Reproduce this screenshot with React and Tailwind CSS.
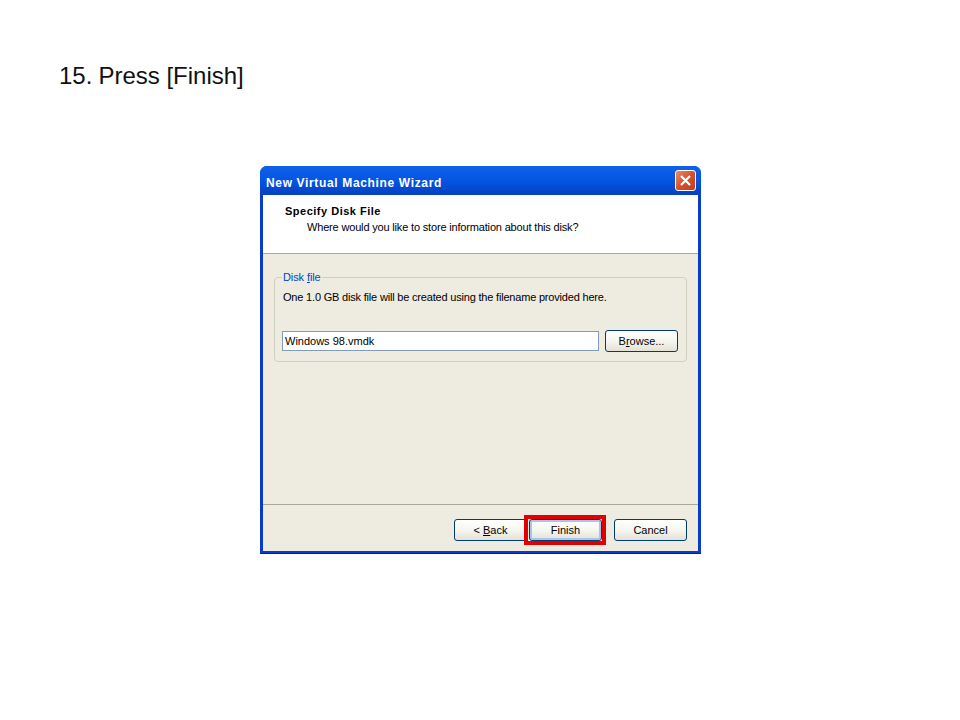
import React from 'react';

const font = "font-['Liberation_Sans',Arial,sans-serif]";

function XpButton({ children, className = '' }) {
    return (
        <button className={`h-[22px] rounded-[3px] border border-[#003c74] bg-gradient-to-b from-white via-[#f6f6f0] to-[#e4e1d6] text-[11px] leading-[20px] text-black text-center ${className}`}>
            {children}
        </button>
    );
}

export default function App() {
    return (
        <div className={`w-[960px] h-[720px] bg-white overflow-hidden ${font}`}>
            <h1 className="pt-[62px] pl-[59px] text-[24px] leading-[27px] font-normal text-[#111]">
                15.<span className="ml-[6px]">Press [Finish]</span>
            </h1>

            {/* Wizard window */}
            <div className="ml-[260px] mt-[77px] w-[441px] h-[388px] flex flex-col rounded-t-[7px] bg-[#0a3ccc] border-b border-[#00209a] px-[3px] pb-[2px] overflow-hidden">
                <div className="-mx-[3px] h-[29px] shrink-0 flex items-center justify-between pl-[6px] pr-[5px] bg-gradient-to-b from-[#0f62e8] via-[#0555e3] to-[#0440c0]">
                    <span className="mt-[4px] text-[12px] font-bold tracking-[0.65px] text-white">New Virtual Machine Wizard</span>
                    <div className="w-[21px] h-[21px] rounded-[3px] border border-white bg-gradient-to-br from-[#e88a6c] via-[#d6512c] to-[#c23d17] flex items-center justify-center">
                        <svg width="13" height="13" viewBox="0 0 13 13">
                            <path d="M2 2 L11 11 M11 2 L2 11" stroke="white" strokeWidth="2.2" />
                        </svg>
                    </div>
                </div>

                <div className="flex-1 flex flex-col bg-[#eeebe0]">
                    {/* Header */}
                    <div className="h-[59px] shrink-0 bg-white border-b border-[#aca899] pt-[9px] pl-[22px] text-[11px] text-black">
                        <div className="font-bold leading-[14px] tracking-[0.5px]">Specify Disk File</div>
                        <div className="pl-[22px] mt-[2px] leading-[14px] tracking-[-0.17px]">Where would you like to store information about this disk?</div>
                    </div>

                    {/* Body */}
                    <div className="flex-1 px-[11px] pt-[17px]">
                        <fieldset className="h-[91px] rounded-[4px] border border-[#d0d0bf] px-[7px] m-0">
                            <legend className="px-[1px] text-[11px] leading-[13px] tracking-[-0.1px] text-[#0046d5]">
                                Disk <span className="underline">f</span>ile
                            </legend>
                            <p className="mt-[6px] pl-[1px] text-[11px] leading-[14px] tracking-[-0.19px] text-black">
                                One 1.0 GB disk file will be created using the filename provided here.
                            </p>
                            <div className="mt-[26px] flex items-center justify-between">
                                <div className="w-[317px] h-[20px] bg-white border border-[#7f9db9] pl-[2px] text-[11px] leading-[18px] text-black">
                                    Windows 98.vmdk
                                </div>
                                <XpButton className="w-[73px] mr-[1px]">
                                    B<span className="underline">r</span>owse...
                                </XpButton>
                            </div>
                        </fieldset>
                    </div>

                    {/* Footer */}
                    <div className="h-[47px] shrink-0 border-t border-[#aca899] flex items-start justify-end pt-[14px] pr-[11px]">
                        <XpButton className="w-[73px] mr-[2px]">
                            &lt; <span className="underline">B</span>ack
                        </XpButton>
                        <div className="relative mr-[12px]">
                            <XpButton className="w-[73px] block shadow-[inset_0_0_0_2px_#a9c3ec]">Finish</XpButton>
                            {/* red highlight drawn over the screenshot */}
                            <div className="absolute -left-[5px] -right-[4px] -top-[4px] -bottom-[4px] border-[4px] border-[#e00000]" />
                        </div>
                        <XpButton className="w-[73px]">Cancel</XpButton>
                    </div>
                </div>
            </div>
        </div>
    );
}
